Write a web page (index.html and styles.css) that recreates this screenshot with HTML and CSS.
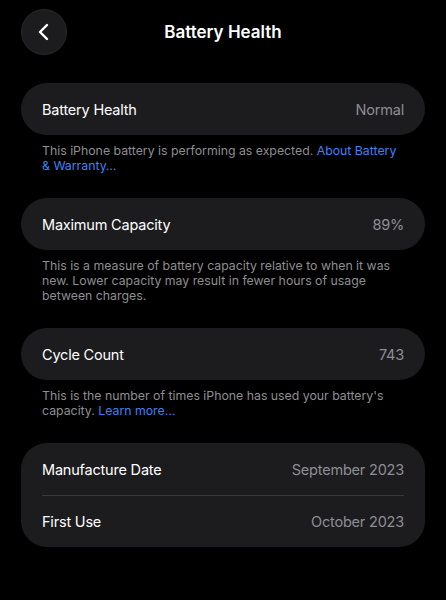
FILE: index.html
```html
<!DOCTYPE html>
<html lang="en">
<head>
    <meta charset="UTF-8">
    <meta name="viewport" content="width=device-width, initial-scale=1.0">
    <title>Battery Health</title>
    <link rel="stylesheet" href="styles.css">
</head>
<body>
    <div class="screen">
        <div class="nav">
            <button class="back-btn" type="button">
                <svg width="14" height="18" viewBox="0 0 14 18"><path d="M10 2 L3 9 L10 16" fill="none" stroke="#fff" stroke-width="2.4" stroke-linecap="round" stroke-linejoin="round"/></svg>
            </button>
            <h1>Battery Health</h1>
        </div>

        <div class="group">
            <div class="row"><span>Battery Health</span><span class="value">Normal</span></div>
        </div>
        <p class="note">
            <span class="line">This iPhone battery is performing as expected. <a href="#">About Battery</a></span>
            <span class="line"><a href="#">&amp; Warranty…</a></span>
        </p>

        <div class="group">
            <div class="row"><span>Maximum Capacity</span><span class="value">89%</span></div>
        </div>
        <p class="note">This is a measure of battery capacity relative to when it was new. Lower capacity may result in fewer hours of usage between charges.</p>

        <div class="group">
            <div class="row"><span>Cycle Count</span><span class="value">743</span></div>
        </div>
        <p class="note">
            <span class="line">This is the number of times iPhone has used your battery's</span>
            <span class="line">capacity. <a href="#">Learn more…</a></span>
        </p>

        <div class="group">
            <div class="row"><span>Manufacture Date</span><span class="value">September 2023</span></div>
            <div class="row"><span>First Use</span><span class="value">October 2023</span></div>
        </div>
    </div>
</body>
</html>
```

FILE: styles.css
```css
body {
    margin: 0;
    background-color: #000;
    font-family: Inter, "Liberation Sans", sans-serif;
    color: #fff;
}
.screen {
    padding: 9px 21px 20px;
}
.nav {
    display: flex;
    align-items: center;
    height: 46px;
    margin-bottom: 28px;
}
.back-btn {
    width: 46px;
    height: 46px;
    border-radius: 50%;
    background-color: #1c1c1e;
    border: 1px solid #2a2a2c;
    display: flex;
    align-items: center;
    justify-content: center;
    padding: 0;
}
h1 {
    flex: 1;
    margin: 0 46px 0 0;
    text-align: center;
    font-size: 17px;
    font-weight: 600;
}
.group {
    background-color: #1c1c1e;
    border-radius: 26px;
    padding: 0 21px;
}
.row {
    display: flex;
    justify-content: space-between;
    align-items: center;
    height: 52px;
    font-size: 14.5px;
    letter-spacing: -0.2px;
}
.row + .row {
    height: 51px;
    border-top: 1px solid #38383a;
}
.value {
    color: #8e8e93;
}
.note {
    margin: 8px 21px 25px;
    font-size: 12.3px;
    line-height: 15px;
    color: #8e8e93;
}
.note .line {
    display: block;
}
.note a {
    color: #3f82f7;
    text-decoration: none;
}
```
